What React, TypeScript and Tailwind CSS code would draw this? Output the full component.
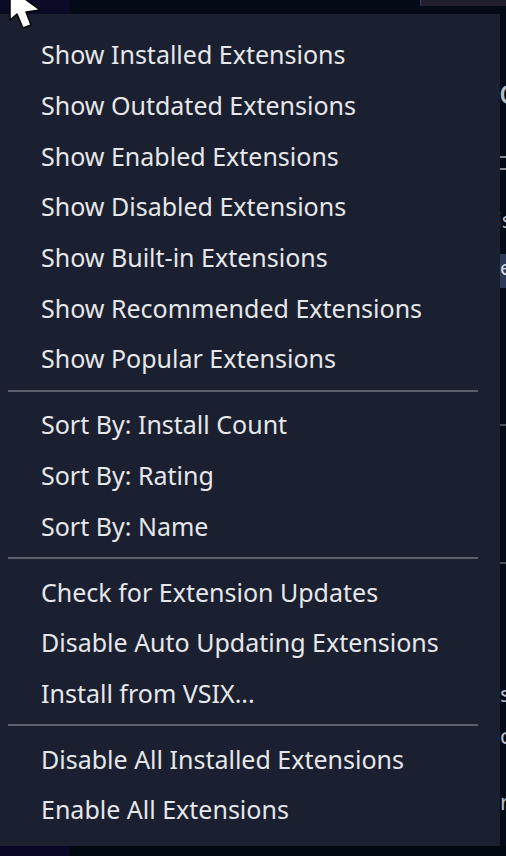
import React from "react";

const groups: string[][] = [
  [
    "Show Installed Extensions",
    "Show Outdated Extensions",
    "Show Enabled Extensions",
    "Show Disabled Extensions",
    "Show Built-in Extensions",
    "Show Recommended Extensions",
    "Show Popular Extensions",
  ],
  ["Sort By: Install Count", "Sort By: Rating", "Sort By: Name"],
  ["Check for Extension Updates", "Disable Auto Updating Extensions", "Install from VSIX..."],
  ["Disable All Installed Extensions", "Enable All Extensions"],
];

function Item({ label }: { label: string }) {
  return (
    <div className="h-[50.67px] flex items-center pl-[41px] text-[25px] text-[#e6e7ea] whitespace-nowrap leading-none">
      {label}
    </div>
  );
}

function Separator() {
  return (
    <div className="h-[15.33px] pt-[5.67px] pl-[8px] pr-[22px]">
      <div className="h-[2px] bg-[#5b5f69]" />
    </div>
  );
}

export default function App() {
  return (
    <div
      className="w-[506px] h-[856px] bg-[#020b16] relative overflow-hidden flex flex-col"
      style={{ fontFamily: '"Noto Sans", "Open Sans", sans-serif' }}
    >
      <div className="h-[14px] flex shrink-0">
        <div className="w-[70px] bg-[#0b0a27]" />
        <div className="w-[350px]" />
        <div className="flex-1 h-[6px] bg-[#221f2e] border-l border-[#3b3570]" />
      </div>
      <div className="flex flex-1">
        <div className="w-[500px] h-[832px] bg-[#1b2030] pt-[15.67px] pb-[10.67px] flex flex-col">
          {groups.map((g, gi) => (
            <React.Fragment key={gi}>
              {gi > 0 && <Separator />}
              {g.map((l) => (
                <Item key={l} label={l} />
              ))}
            </React.Fragment>
          ))}
        </div>
        <div className="w-[6px] overflow-hidden flex flex-col text-[#b8bcc4] leading-none">
          <div className="h-[60px]" />
          <div className="h-[34px] text-[34px] -ml-[1px]">c</div>
          <div className="h-[48px]" />
          <div className="h-[2px] w-full bg-[#8a8d94]" />
          <div className="h-[10px]" />
          <div className="h-[2px] w-full bg-[#8a8d94]" />
          <div className="h-[38px]" />
          <div className="h-[24px] text-[22px] -ml-[4px] whitespace-nowrap">is</div>
          <div className="h-[22px]" />
          <div className="h-[34px] bg-[#2c3a56] text-[20px] text-[#e0e0e0] pt-[4px] whitespace-nowrap">
            e
          </div>
          <div className="h-[136px]" />
          <div className="h-[2px] w-full bg-[#4a4e57]" />
          <div className="h-[136px]" />
          <div className="h-[2px] w-full bg-[#4a4e57]" />
          <div className="h-[118px]" />
          <div className="h-[24px] text-[22px]">s</div>
          <div className="h-[18px]" />
          <div className="h-[24px] text-[22px]">c</div>
          <div className="h-[42px]" />
          <div className="h-[24px] text-[22px]">r</div>
        </div>
      </div>
      <div className="h-[10px] flex shrink-0">
        <div className="w-[70px] bg-[#0a0626]" />
        <div className="flex-1 bg-[#02080f]" />
      </div>
      <svg className="absolute left-0 top-0" width="50" height="40" viewBox="0 0 50 40">
        <polygon
          points="10,-12 10,20 17,14 23,28 31,25 26,12 40,10"
          fill="#ffffff"
          stroke="#000000"
          strokeWidth="1.5"
          strokeLinejoin="round"
        />
      </svg>
    </div>
  );
}
